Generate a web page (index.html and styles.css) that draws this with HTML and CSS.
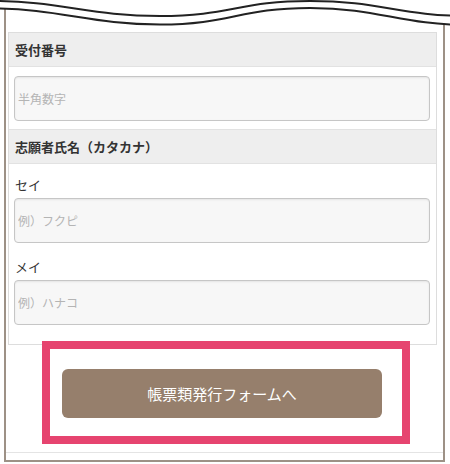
FILE: index.html
```html
<!DOCTYPE html>
<html lang="ja">
<head>
    <meta charset="UTF-8">
    <meta name="viewport" content="width=device-width, initial-scale=1.0">
    <title>帳票類発行</title>
    <link rel="stylesheet" href="styles.css">
</head>
<body>
    <div class="frame">
        <svg class="torn-edge" width="450" height="30" viewBox="0 0 450 30" aria-hidden="true">
            <path d="M-10 0 H470 V25 C400 25 380 8 310 8 C240 8 230 24.5 160 24.5 C90 24.5 60 8.5 -10 8.5 Z" fill="#ffffff"/>
            <path d="M-10 1 C60 1 90 16 160 16 C230 16 240 1 310 1 C380 1 400 16 470 16" fill="none" stroke="#222" stroke-width="2"/>
            <path d="M-10 8.5 C60 8.5 90 24.5 160 24.5 C230 24.5 240 8 310 8 C380 8 400 25 470 25" fill="none" stroke="#222" stroke-width="2"/>
        </svg>

        <div class="frame-body">
            <div class="panel">
                <h2 class="panel-head">受付番号</h2>
                <div class="panel-body first">
                    <input type="text" class="field" placeholder="半角数字">
                </div>

                <h2 class="panel-head bordered">志願者氏名（カタカナ）</h2>
                <div class="panel-body names">
                    <label class="field-label" for="sei">セイ</label>
                    <input type="text" id="sei" class="field" placeholder="例）フクピ">
                    <label class="field-label second" for="mei">メイ</label>
                    <input type="text" id="mei" class="field" placeholder="例）ハナコ">
                </div>
            </div>

            <div class="highlight">
                <button class="submit-btn">帳票類発行フォームへ</button>
            </div>
        </div>
    </div>
</body>
</html>
```

FILE: styles.css
```css
body {
    margin: 0;
    padding: 0;
    background: #ffffff;
    color: #333;
    font-family: "Noto Sans CJK JP", "Noto Sans", sans-serif;
}

.frame {
    position: relative;
    width: 437px;
    margin-left: 4px;
    border-left: 2px solid #9d9186;
    border-right: 2px solid #9d9186;
    border-bottom: 2px solid #9d9186;
    padding-bottom: 7px;
}

.torn-edge {
    position: absolute;
    top: 0;
    left: -6px;
    z-index: 3;
}

.frame-body {
    padding-top: 32px;
    padding-bottom: 8px;
    border-bottom: 1px solid #e4e4e4;
}

.panel {
    margin-left: 2px;
    width: 427px;
    border: 1px solid #dddddd;
    background: #ffffff;
}

.panel-head {
    margin: 0;
    height: 33px;
    padding-left: 6px;
    background: #eeeeee;
    border-bottom: 1px solid #e2e2e2;
    font-size: 13px;
    font-weight: bold;
    line-height: 33px;
    color: #333;
}

.panel-head.bordered {
    border-top: 1px solid #e2e2e2;
}

.panel-body {
    padding: 9px 5px 8px 5px;
}

.panel-body.names {
    padding-top: 11px;
    padding-bottom: 19px;
}

.field-label {
    display: block;
    height: 20px;
    margin-bottom: 3px;
    padding-left: 1px;
    font-size: 13px;
    line-height: 20px;
    color: #333;
}

.field-label.second {
    margin-top: 14px;
}

.field {
    display: block;
    box-sizing: border-box;
    width: 416px;
    height: 45px;
    margin: 0;
    padding: 0 3px;
    border: 1px solid #c6c6c6;
    border-radius: 4px;
    background: #f7f7f7;
    box-shadow: inset 0 1px 2px rgba(0, 0, 0, 0.08);
    font-family: inherit;
    font-size: 12px;
    color: #333;
}

.field::placeholder {
    color: #b4b4b4;
}

.highlight {
    position: relative;
    z-index: 2;
    box-sizing: border-box;
    width: 368px;
    height: 103px;
    margin: -4px 0 0 36px;
    padding: 20px 12px 18px;
    border: 8px solid #e6446f;
    background: #ffffff;
}

.submit-btn {
    display: block;
    width: 320px;
    height: 49px;
    border: none;
    border-radius: 6px;
    background: #967f6c;
    color: #ffffff;
    font-family: inherit;
    font-size: 15px;
    cursor: pointer;
}
```
